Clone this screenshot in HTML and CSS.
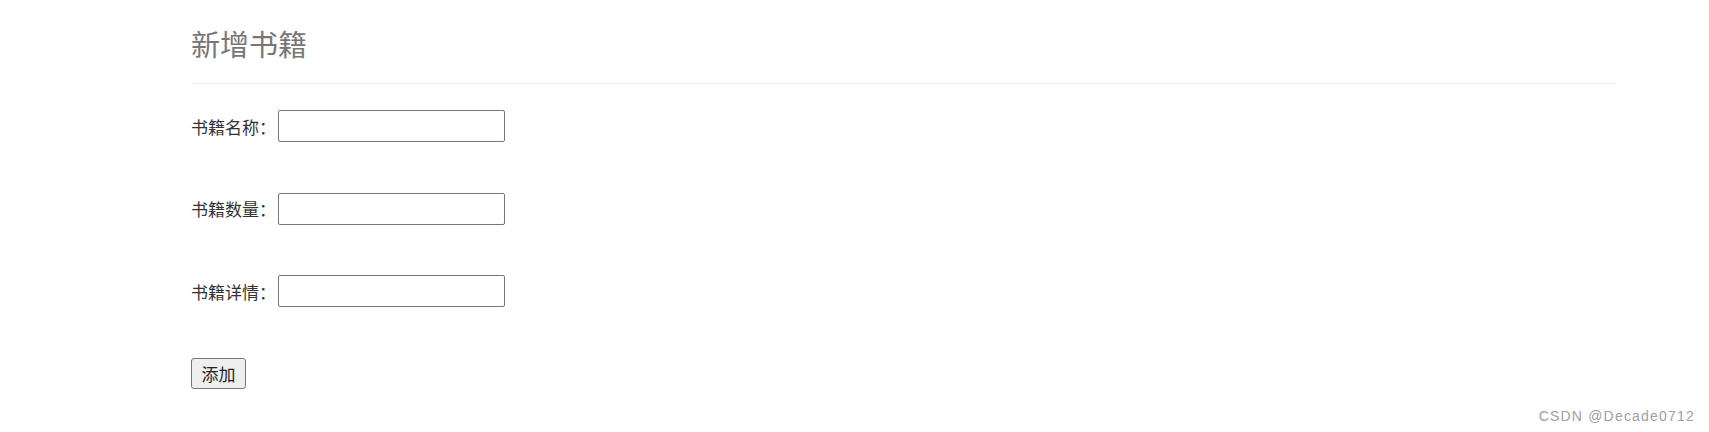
FILE: index.html
```html
<!DOCTYPE html>
<html lang="zh-CN">
<head>
<meta charset="utf-8">
<title>新增书籍</title>
<link rel="stylesheet" href="styles.css">
</head>
<body>
<div class="container">
  <div class="page-header">
    <h2 class="title">新增书籍</h2>
  </div>
  <form class="book-form">
    <div class="row">
      <label class="label">书籍名称：</label>
      <input class="field" type="text">
    </div>
    <div class="row">
      <label class="label">书籍数量：</label>
      <input class="field" type="text">
    </div>
    <div class="row">
      <label class="label">书籍详情：</label>
      <input class="field" type="text">
    </div>
    <div class="row">
      <button class="btn" type="button">添加</button>
    </div>
  </form>
</div>
<div class="watermark">CSDN @Decade0712</div>
</body>
</html>
```

FILE: styles.css
```css
html, body {
  margin: 0;
  padding: 0;
  background: #ffffff;
}

body {
  font-family: "Liberation Sans", Arial, "Noto Sans CJK SC", sans-serif;
  color: #333333;
  font-size: 16px;
  height: 432px;
  position: relative;
  overflow: hidden;
}

.container {
  padding: 0 93px 0 191px;
}

.page-header {
  border-bottom: 1px solid #eeeeee;
  padding-top: 27px;
  padding-bottom: 23px;
}

.title {
  margin: 0;
  font-size: 29px;
  line-height: 33px;
  font-weight: normal;
  color: #777777;
  font-family: "Noto Sans CJK SC", sans-serif;
}

.book-form {
  display: flex;
  flex-direction: column;
  gap: 50.5px;
  padding-top: 26px;
}

.row {
  display: flex;
  align-items: center;
  height: 32px;
}

.label {
  flex: 0 0 87px;
  font-family: "Noto Sans CJK SC", sans-serif;
  font-size: 17px;
  color: #333333;
  white-space: nowrap;
}

.field {
  box-sizing: border-box;
  width: 227px;
  height: 32px;
  margin: 0;
  border: 1px solid #767676;
  border-radius: 2px;
  padding: 1px 4px;
  background: #ffffff;
  font-size: 16px;
}

.btn {
  box-sizing: border-box;
  width: 55px;
  height: 31px;
  margin: 0;
  padding: 0;
  border: 1px solid #767676;
  border-radius: 3px;
  background: #efefef;
  color: #222222;
  font-family: "Noto Sans CJK SC", sans-serif;
  font-size: 17px;
}

.watermark {
  position: absolute;
  right: 14px;
  bottom: 8px;
  font-family: "Liberation Sans", Arial, sans-serif;
  font-size: 14px;
  letter-spacing: 1.2px;
  color: #a0a0a0;
}
```
